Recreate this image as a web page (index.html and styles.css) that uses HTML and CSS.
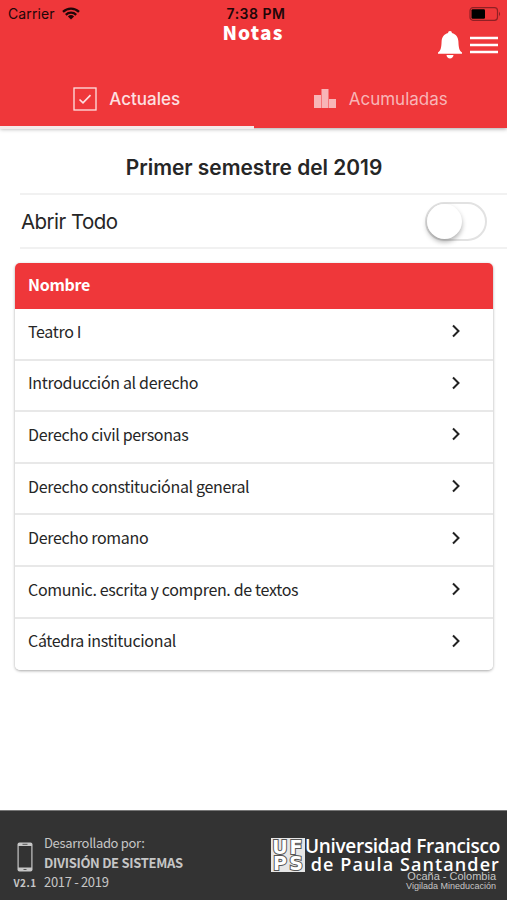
FILE: index.html
```html
<!DOCTYPE html>
<html lang="es">
<head>
    <meta charset="UTF-8">
    <meta name="viewport" content="width=device-width, initial-scale=1.0">
    <title>Notas</title>
    <link rel="stylesheet" href="styles.css">
</head>
<body>
    <div class="app">
        <header class="header">
            <div class="status">
                <div class="carrier">
                    <span>Carrier</span>
                    <svg width="18" height="13" viewBox="0 0 18 13" fill="none" stroke="#210608" stroke-width="2.3">
                        <path d="M1 4.8a11.5 11.5 0 0 1 16 0"/>
                        <path d="M3.8 7.8a7.5 7.5 0 0 1 10.4 0"/>
                        <path d="M9 12.5L5.9 9.5a4.5 4.5 0 0 1 6.2 0z" fill="#210608" stroke="none"/>
                    </svg>
                </div>
                <span class="time">7:38 PM</span>
                <svg class="battery" width="33" height="14" viewBox="0 0 33 14">
                    <rect x="1" y=".7" width="27.5" height="12.6" rx="3" fill="none" stroke="#8f2024" stroke-width="1.2"/>
                    <rect x="2.5" y="2.2" width="13.5" height="9.6" rx="1.2" fill="#000"/>
                    <path d="M30 4.8q2.2 2.2 0 4.4z" fill="#8f2024"/>
                </svg>
            </div>
            <div class="navbar">
                <h1 class="title">Notas</h1>
                <div class="actions">
                    <svg width="26" height="30" viewBox="0 0 26 30" fill="#fff">
                        <path d="M13 1c-1.300 0-1.900.9-1.900 2C7 4 4.800 7.300 4.600 11.500 4.300 18.500 3.600 20.500 1 22.500v1.200h24v-1.200c-2.600-2-3.300-4-3.600-11C21.200 7.300 19 4 14.900 3c0-1.100-.6-2-1.900-2z"/>
                        <path d="M9.500 25h7c-.3 2.200-1.600 3.500-3.500 3.500S9.800 27.200 9.500 25z"/>
                    </svg>
                    <svg width="28" height="18" viewBox="0 0 28 18" stroke="#fff" stroke-width="2.500">
                        <path d="M0 2h28M0 9h28M0 16h28"/>
                    </svg>
                </div>
            </div>
            <nav class="tabs">
                <a class="tab active">
                    <svg width="24" height="24" viewBox="0 0 24 24" fill="none" stroke="#fde0e1">
                        <rect x="1" y="1" width="22" height="22" stroke-width="1.300"/>
                        <path d="M6.500 12.500l3.500 3.300 7.500-7.600" stroke-width="1.700"/>
                    </svg>
                    <span>Actuales</span>
                </a>
                <a class="tab">
                    <svg width="24" height="20" viewBox="0 0 24 20" fill="#f8b5b7">
                        <path d="M1 6h7v13H1zM8.500 0h7v19h-7zM16 10h7v9h-7z"/>
                    </svg>
                    <span>Acumuladas</span>
                </a>
            </nav>
        </header>

        <main class="content">
            <h2 class="semester">Primer semestre del 2019</h2>
            <div class="toggle-row">
                <span>Abrir Todo</span>
                <div class="toggle"><div class="knob"></div></div>
            </div>
            <div class="card">
                <div class="card-header">Nombre</div>
                <ul class="list">
                    <li><span>Teatro I</span><svg class="chevron" viewBox="0 0 10 14"><path d="M2 1.500l5.500 5.500L2 12.500"/></svg></li>
                    <li><span>Introducción al derecho</span><svg class="chevron" viewBox="0 0 10 14"><path d="M2 1.500l5.500 5.500L2 12.500"/></svg></li>
                    <li><span>Derecho civil personas</span><svg class="chevron" viewBox="0 0 10 14"><path d="M2 1.500l5.500 5.500L2 12.500"/></svg></li>
                    <li><span>Derecho constituciónal general</span><svg class="chevron" viewBox="0 0 10 14"><path d="M2 1.500l5.500 5.500L2 12.500"/></svg></li>
                    <li><span>Derecho romano</span><svg class="chevron" viewBox="0 0 10 14"><path d="M2 1.500l5.500 5.500L2 12.500"/></svg></li>
                    <li><span>Comunic. escrita y compren. de textos</span><svg class="chevron" viewBox="0 0 10 14"><path d="M2 1.500l5.500 5.500L2 12.500"/></svg></li>
                    <li><span>Cátedra institucional</span><svg class="chevron" viewBox="0 0 10 14"><path d="M2 1.500l5.500 5.500L2 12.500"/></svg></li>
                </ul>
            </div>
        </main>

        <footer class="footer">
            <div class="version">
                <svg width="16" height="30" viewBox="0 0 16 30">
                    <rect x=".5" y=".5" width="15" height="29" rx="2" fill="#c6c6c6"/>
                    <rect x="1.700" y="4" width="12.600" height="21.500" fill="#333"/>
                    <path d="M5.500 2.300h5M6.500 27.500h3" stroke="#555" stroke-width="1"/>
                </svg>
                <span>V2.1</span>
            </div>
            <div class="credits">
                <span>Desarrollado por:</span>
                <strong>DIVISIÓN DE SISTEMAS</strong>
                <span>2017 - 2019</span>
            </div>
            <div class="brand">
                <div class="logo"><b>U</b><b>F</b><b>P</b><b>S</b></div>
                <div class="university">
                    <span class="uni-first">Universidad Francisco</span>
                    <span class="uni-second">de Paula Santander</span>
                    <span class="city">Ocaña - Colombia</span>
                    <span class="notice">Vigilada Mineducación</span>
                </div>
            </div>
        </footer>
    </div>
</body>
</html>
```
FILE: styles.css
```css
* { box-sizing: border-box; }
body { margin: 0; background: #fff; color: #262626; font-family: "Noto Sans CJK SC", "Noto Sans", sans-serif; }
svg { display: block; flex: none; }
.app { display: flex; flex-direction: column; height: 900px; overflow: hidden; }

.header { height: 128px; background: #ef373a; box-shadow: 0 1px 4px rgba(0, 0, 0, 0.35); flex: none; }
.status { display: grid; grid-template-columns: 1fr auto 1fr; align-items: center; height: 22px; padding: 6px 5px 0 8px; font-family: Inter, sans-serif; font-size: 14px; line-height: 16px; color: #210608; }
.carrier { display: flex; align-items: center; gap: 7px; letter-spacing: 0.1px; }
.carrier svg { margin-top: -2px; }
.time { font-weight: 600; letter-spacing: 0.5px; margin-left: 2px; }
.battery { justify-self: end; margin-top: -1px; }
.navbar { display: grid; grid-template-columns: minmax(0, 1fr) auto minmax(0, 1fr); height: 49px; padding: 0 9px 0 8px; }
.title { grid-column: 2; margin: 0; color: #fff; font-size: 19px; line-height: 20px; font-weight: 900; letter-spacing: 1.2px; }
.actions { display: flex; justify-content: flex-end; align-items: flex-start; gap: 7px; padding-top: 8px; }
.actions svg:last-child { margin-top: 6px; }
.tabs { display: flex; height: 58px; }
.tab { flex: 1; display: flex; align-items: center; justify-content: center; gap: 12px; padding-top: 1px; color: #f8b5b7; font: 400 17px/24px Inter, sans-serif; border-bottom: 3px solid transparent; }
.tab.active { color: #fde0e1; border-color: #f4eaea; font-weight: 500; }

.content { flex: 1; }
.semester { margin: 0; padding: 27px 0 0 1px; height: 65px; text-align: center; font: 600 20.9px/26px Inter, sans-serif; }
.toggle-row { display: flex; align-items: center; justify-content: space-between; height: 56px; margin-left: 20px; padding: 0 20px 0 1px; border-top: 2px solid #f1f1f1; border-bottom: 2px solid #f1f1f1; font: 20.5px/26px Inter, sans-serif; letter-spacing: -0.55px; }
.toggle-row span { padding-top: 1px; }
.toggle { width: 62px; height: 39px; border: 2px solid #e2e2e2; border-radius: 20px; }
.knob { width: 35px; height: 35px; border-radius: 50%; background: #fff; box-shadow: 0 3px 5px rgba(0, 0, 0, 0.3); }
.card { margin: 14px 14px 0 15px; border-radius: 5px; overflow: hidden; box-shadow: 0 1px 3px rgba(0, 0, 0, 0.35); }
.card-header { height: 46px; padding-left: 13px; background: #ef373a; color: #fff; font-size: 16px; font-weight: 700; line-height: 42px; letter-spacing: -0.3px; }
.list { margin: 0; padding: 0; list-style: none; background: #fff; }
.list li { display: flex; align-items: center; justify-content: space-between; height: 51.6px; padding: 0 32px 5px 13px; border-bottom: 2px solid #e8e8e8; font-size: 16px; line-height: 24px; letter-spacing: -0.33px; }
.list li span { margin-top: -1px; }
.list li:last-child { border-bottom: none; padding-bottom: 7px; }
.chevron { width: 10px; height: 14px; fill: none; stroke: #222; stroke-width: 2; }

.footer { display: flex; height: 90px; padding: 0 7px 0 14px; background: #333; border-top: 1px solid #777; color: #c6c6c6; flex: none; }
.version { display: flex; flex-direction: column; align-items: center; width: 22px; padding-top: 31px; font-size: 10px; font-weight: 700; line-height: 14px; letter-spacing: 0.5px; white-space: nowrap; }
.version span { margin-top: 4px; }
.credits { display: flex; flex-direction: column; padding: 22px 0 0 8px; font-size: 13px; line-height: 19.5px; letter-spacing: -0.32px; white-space: nowrap; }
.brand { display: flex; margin-left: auto; gap: 2px; padding-top: 27px; color: #fff; }
.logo { display: grid; grid-template-columns: 16px 16px; grid-template-rows: 16px 16px; width: 34px; height: 34px; padding: 1px; background: #e6e6e6; font: 700 19px/16px "DejaVu Sans", sans-serif; -webkit-text-stroke: 2px #555; paint-order: stroke fill; }
.logo b { display: flex; justify-content: center; }
.university { display: flex; flex-direction: column; align-items: flex-end; width: 193px; white-space: nowrap; font-family: "Open Sans", sans-serif; font-weight: 600; }
.uni-first { font-size: 19px; line-height: 17px; letter-spacing: -0.3px; }
.uni-second { font-size: 18px; line-height: 18px; letter-spacing: 1.1px; }
.city { margin: -2px 4px 0 0; font: 11px/10px "Liberation Sans", sans-serif; color: #c6c6c6; }
.notice { margin-right: 4px; font: 9px/10px "Liberation Sans", sans-serif; color: #c6c6c6; }
```
